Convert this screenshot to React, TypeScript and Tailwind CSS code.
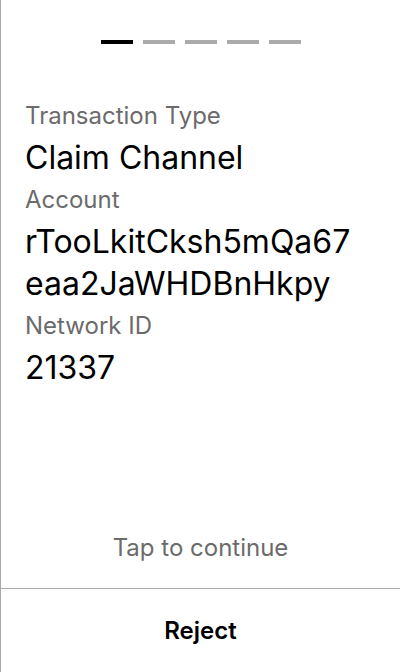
import React from "react"

const fields = [
    { label: "Transaction Type", value: "Claim Channel" },
    { label: "Account", value: "rTooLkitCksh5mQa67eaa2JaWHDBnHkpy" },
    { label: "Network ID", value: "21337" },
]

export default function App() {
    const steps = [0, 1, 2, 3, 4]
    return (
        <div
            className="flex h-[672px] w-[400px] flex-col border-l border-[#aaaaaa] bg-white text-black"
            style={{ fontFamily: "Inter, 'Noto Sans', sans-serif" }}
        >
            {/* Step indicator */}
            <div className="flex justify-center gap-[10px] pt-10">
                {steps.map((i) => (
                    <div
                        key={i}
                        className={i === 0 ? "h-1 w-8 bg-black" : "h-1 w-8 bg-[#aaaaaa]"}
                    />
                ))}
            </div>

            {/* Details */}
            <div className="mt-[51px] flex flex-col pl-6 pr-[36px]">
                {fields.map((f) => (
                    <div key={f.label} className="flex flex-col">
                        <p className="text-[24px] leading-[42px] text-[#6b6b6b]">{f.label}</p>
                        <p className="break-all text-[32px] leading-[42px]">{f.value}</p>
                    </div>
                ))}
            </div>

            <div className="flex-1" />

            <p className="pb-[19px] text-center text-[24px] leading-[42px] text-[#6b6b6b]">
                Tap to continue
            </p>

            <div className="flex h-[84px] items-center justify-center border-t border-[#aaaaaa]">
                <button className="text-[24px] font-semibold">Reject</button>
            </div>
        </div>
    )
}
